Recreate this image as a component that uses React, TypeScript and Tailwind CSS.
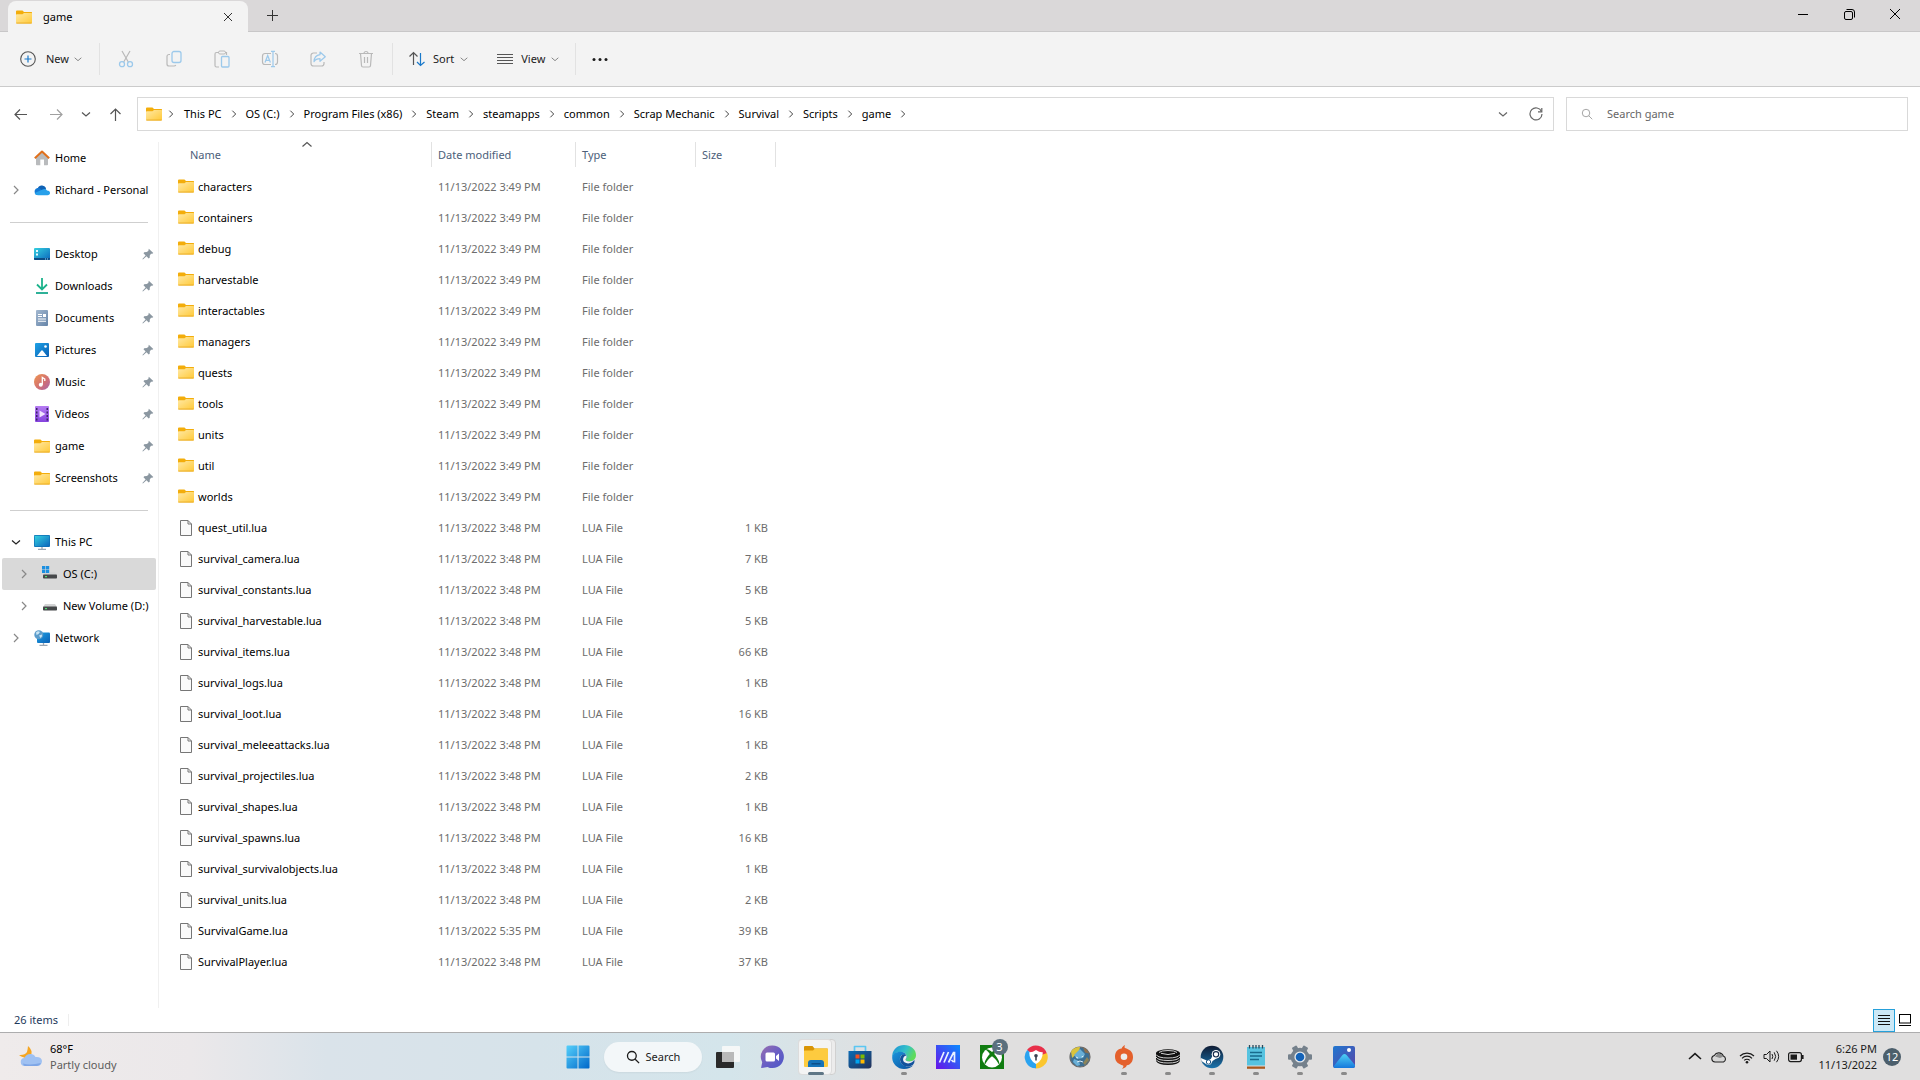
import React from "react";

type P = { className?: string };

/* ---------- line icons ---------- */

function Chevron({ dir, className = "" }: { dir: "up" | "down" | "right"; className?: string }) {
  const d = { up: "M1.5 7.5 6 3.5l4.5 4", down: "M2 4.5 6 8l4-3.5", right: "M4 2l4 4-4 4" }[dir];
  return (
    <svg viewBox="0 0 12 12" className={`shrink-0 ${className}`} fill="none" stroke="currentColor" strokeWidth="1.2">
      <path d={d} />
    </svg>
  );
}

function Icon({ size = 18, children, className = "" }: { size?: number; children: React.ReactNode; className?: string }) {
  return (
    <svg width={size} height={size} viewBox={`0 0 ${size} ${size}`} fill="none" className={`shrink-0 ${className}`} aria-hidden="true">
      {children}
    </svg>
  );
}

const GREY = "#b9b9b9";
const BLUE = "#9cc9eb";

const CutIcon = () => (
  <Icon>
    <path d="M5 1l6.300 11M13 1L6.700 12" stroke={GREY} strokeWidth="1.200" />
    <circle cx="5" cy="14.200" r="2.500" stroke={BLUE} strokeWidth="1.300" />
    <circle cx="13" cy="14.200" r="2.500" stroke={BLUE} strokeWidth="1.300" />
  </Icon>
);
const CopyIcon = () => (
  <Icon>
    <path d="M5 4.500H4A2 2 0 0 0 2 6.500V14a2 2 0 0 0 2 2h5a2 2 0 0 0 1.800-1" stroke={GREY} strokeWidth="1.200" />
    <rect x="7" y="1.500" width="9" height="11" rx="2" stroke={BLUE} strokeWidth="1.300" />
  </Icon>
);
const PasteIcon = () => (
  <Icon>
    <path d="M6 2.500H3.500A1.500 1.500 0 0 0 2 4v11.500A1.500 1.500 0 0 0 3.500 17H6M12 2.500h1.500v2.500" stroke={GREY} strokeWidth="1.200" />
    <rect x="5.500" y="1" width="7" height="3" rx="1.500" stroke={GREY} />
    <rect x="8.500" y="6.500" width="7.500" height="10.500" rx="1" stroke={BLUE} strokeWidth="1.300" />
  </Icon>
);
const RenameIcon = () => (
  <Icon>
    <path d="M10 3.500H4a2.500 2.500 0 0 0-2.500 2.500v6A2.500 2.500 0 0 0 4 14.500h6M14 3.500a2.500 2.500 0 0 1 2.500 2.500v6a2.500 2.500 0 0 1-2.500 2.500" stroke={GREY} strokeWidth="1.200" />
    <path d="M4 12.500l2.700-7 2.700 7M5 10.300h3.500M12 1.500v15M10 1.300h4M10 16.700h4" stroke={BLUE} strokeWidth="1.200" />
  </Icon>
);
const ShareIcon = () => (
  <Icon>
    <path d="M8 3H4.500A2.500 2.500 0 0 0 2 5.500v8A2.500 2.500 0 0 0 4.500 16h8a2.500 2.500 0 0 0 2.500-2.500V12" stroke={GREY} strokeWidth="1.200" />
    <path d="M11 2l5.300 4.700L11 11.300V8.700c-3 0-4.700.8-6 3 .2-4 2-6.500 6-7z" stroke={BLUE} strokeWidth="1.200" strokeLinejoin="round" />
  </Icon>
);
const TrashIcon = () => (
  <Icon>
    <path d="M2 3.500h14M3.500 3.500l1 12A1.500 1.500 0 0 0 6 17h6a1.500 1.500 0 0 0 1.500-1.500l1-12M7 3.500a2 2 0 0 1 4 0M7.500 7v6M10.500 7v6" stroke={GREY} strokeWidth="1.200" />
  </Icon>
);

const SearchGlyph = ({ className = "" }: P) => (
  <svg viewBox="0 0 16 16" fill="none" stroke="currentColor" className={`shrink-0 ${className}`} aria-hidden="true">
    <circle cx="6.700" cy="6.700" r="5" />
    <path d="M10.500 10.500L15 15" />
  </svg>
);

/* ---------- explorer icons ---------- */

const FolderIcon = () => (
  <svg width="16" height="14" viewBox="0 0 16 14" className="shrink-0" aria-hidden="true">
    <defs>
      <linearGradient id="fold" x1="0" y1="0" x2="1" y2="1">
        <stop offset="0" stopColor="#ffe9a6" />
        <stop offset="1" stopColor="#ffc937" />
      </linearGradient>
    </defs>
    <path d="M0 1.500Q0 .5 1 .5h5.500L8 2h7.500q.5 0 .5.600V5H0z" fill="#f3ad0b" />
    <path d="M0 5q0-.700.700-.700H6.500L8 3h7.400q.600 0 .600.600V12.500q0 1-1 1H1q-1 0-1-1z" fill="url(#fold)" />
    <path d="M.3 13.100h15.400" stroke="#e9a820" strokeWidth=".9" />
  </svg>
);

const FileIcon = () => (
  <svg width="12" height="16" viewBox="0 0 12 16" className="shrink-0" aria-hidden="true">
    <path d="M.5.500h7.500l3.500 3.500v11.500H.5z" fill="#fafafa" stroke="#767676" />
    <path d="M8 .5V4h3.500" fill="none" stroke="#767676" />
  </svg>
);

const HomeIcon = () => (
  <Icon size={16}>
    <path d="M2 7.500L8 2l6 5.500V14.500q0 .800-.800.800H10V9.500H6.300v5.800H2.800q-.8 0-.8-.8z" fill="#b9bbbd" />
    <path d="M.8 8.300L8 1.500l7.200 6.800" stroke="#e0701c" strokeWidth="2" strokeLinejoin="round" />
  </Icon>
);
const CloudIcon = () => (
  <Icon size={16}>
    <path d="M3.500 7.500A4.500 4.500 0 0 1 12 6l-1 5H3z" fill="#0f62b5" />
    <path d="M3.800 13A3.500 3.500 0 0 1 3 6.200c1.500-.300 3 .3 4 1.200l6 4.600-1 1z" fill="#1478d4" />
    <path d="M4 13.200C2.500 13.200 1 12.500.7 11L8 7.800c2-1.500 4.500-.8 5 .7 2 0 3 1.200 3 2.500s-1 2.200-2.500 2.200z" fill="#28a0ea" />
  </Icon>
);
const DesktopIcon = () => (
  <Icon size={16}>
    <defs>
      <linearGradient id="desk" x1="0" y1="0" x2="1" y2="1">
        <stop offset="0" stopColor="#35d1e0" />
        <stop offset="1" stopColor="#0b66bd" />
      </linearGradient>
    </defs>
    <rect y="2" width="16" height="12" rx="1" fill="url(#desk)" />
    <path d="M0 12h16v1q0 1-1 1H1q-1 0-1-1z" fill="#0c4c86" />
    <path d="M2 4h2v2H2zM2 7.500h2v2H2z" fill="#e7fbff" />
    <path d="M11 12.500h1v1h-1zM13 12.500h1v1h-1z" fill="#9cd7f4" />
  </Icon>
);
const DownloadIcon = () => (
  <Icon size={16}>
    <path d="M8 0v11M3 6.500L8 11.500l5-5" stroke="#1cb38c" strokeWidth="1.800" />
    <path d="M2 15h12" stroke="#17a98d" strokeWidth="1.800" />
  </Icon>
);
const DocumentIcon = () => (
  <Icon size={16}>
    <defs>
      <linearGradient id="docg" x1="0" y1="0" x2="1" y2="1">
        <stop offset="0" stopColor="#a3b8d0" />
        <stop offset="1" stopColor="#6584a8" />
      </linearGradient>
    </defs>
    <rect x="2" y="0" width="12" height="16" rx="1" fill="url(#docg)" />
    <path d="M4 4.500h4M4 6.500h4M4 9h8M4 11.300h8" stroke="#fff" strokeWidth="1.100" />
    <rect x="9" y="4" width="3" height="3" fill="#fff" />
  </Icon>
);
const PicturesIcon = () => (
  <Icon size={16}>
    <defs>
      <linearGradient id="picg" x1="0" y1="0" x2="1" y2="1">
        <stop offset="0" stopColor="#1ea2e6" />
        <stop offset="1" stopColor="#0a5fb4" />
      </linearGradient>
    </defs>
    <rect x="1" y="1" width="14" height="14" rx="1" fill="url(#picg)" />
    <path d="M3 14l4.200-5.300q.8-.8 1.600 0L13 14z" fill="#fff" />
    <circle cx="11.500" cy="4.500" r="1.300" fill="#fff" />
  </Icon>
);
const MusicIcon = () => (
  <Icon size={16}>
    <defs>
      <linearGradient id="musg" x1="0" y1="0" x2="1" y2="1">
        <stop offset="0" stopColor="#f0964f" />
        <stop offset=".6" stopColor="#cf6e76" />
        <stop offset="1" stopColor="#a565b0" />
      </linearGradient>
    </defs>
    <circle cx="8" cy="8" r="8" fill="url(#musg)" />
    <circle cx="6.800" cy="10.700" r="2" fill="#fff" />
    <path d="M8.300 10.700V3.500l2.500 1.500v2" stroke="#fff" strokeWidth="1.300" />
  </Icon>
);
const VideosIcon = () => (
  <Icon size={16}>
    <defs>
      <linearGradient id="vidg" x1="0" y1="0" x2="0" y2="1">
        <stop offset="0" stopColor="#b57bf2" />
        <stop offset="1" stopColor="#8543de" />
      </linearGradient>
    </defs>
    <rect x="1" width="14" height="16" rx="1" fill="url(#vidg)" />
    <path d="M2 2h1.500v2H2zM2 5.500h1.500v2H2zM2 9h1.500v2H2zM2 12.500h1.500v2H2zM12.500 2H14v2h-1.500zM12.500 5.500H14v2h-1.500zM12.500 9H14v2h-1.500zM12.500 12.500H14v2h-1.500z" fill="#3b2466" />
    <path d="M5.500 4.500v7l6-3.500z" fill="#f0e4ff" />
  </Icon>
);
const MonitorIcon = () => (
  <Icon size={16}>
    <rect y="1" width="16" height="12" rx="1" fill="#0d6fb5" />
    <rect x=".7" y="1.700" width="14.600" height="10.600" rx=".5" fill="url(#desk)" />
    <path d="M8 13v2M4 15.300h8" stroke="#9aa6b3" strokeWidth="1.300" />
  </Icon>
);
const NetworkIcon = () => (
  <Icon size={16}>
    <rect x="3" y="2.500" width="13" height="10.500" rx="1" fill="url(#picg)" />
    <path d="M9.500 13v2M5.500 15.300h8" stroke="#9aa6b3" strokeWidth="1.300" />
    <circle cx="4.800" cy="4.800" r="4.500" fill="#5c9ccb" />
    <path d="M2 2.500q2-2 4-.5L4.500 4 2.500 5zM5 5.500l3-1q.5 2-1.500 3.500z" fill="#c9e5f4" />
  </Icon>
);
const DriveIcon = ({ os = false }: { os?: boolean }) => (
  <Icon size={16}>
    <path d="M3 6h10l2 3H1z" fill="#d3d4d5" />
    <rect x="1" y="8.500" width="14" height="4" rx=".8" fill="#46484a" />
    <rect x="3" y="10" width="2" height="1.200" fill="#4ee070" />
    {os && (
      <>
        <path d="M-1-1h9v8h-9z" fill="#d9d9d9" />
        <path d="M0 0h3.300v3.200H0zM3.900 0h3.300v3.200H3.900zM0 3.800h3.300V7H0zM3.900 3.800h3.300V7H3.900z" fill="#1b8fe0" />
      </>
    )}
  </Icon>
);
const PinIcon = () => (
  <svg width="12" height="12" viewBox="0 0 12 12" className="shrink-0" aria-hidden="true">
    <path d="M6.800.7l4.500 4.300-1 .8L9 5.800 7.800 7.500l-.1 2.300-1 .7L4.500 8.300.9 11.400l-.5-.5 3.200-3.500L1.500 5.200l.7-1 2.500-.1L6.300 3z" fill="#8b97a1" />
  </svg>
);

/* ---------- data ---------- */

type NavItem = { label: string; icon: React.ReactNode; chevron?: "right" | "down"; pinned?: boolean; nested?: boolean; selected?: boolean };

const NAV_GROUPS: NavItem[][] = [
  [
    { label: "Home", icon: <HomeIcon /> },
    { label: "Richard - Personal", icon: <CloudIcon />, chevron: "right" },
  ],
  [
    { label: "Desktop", icon: <DesktopIcon />, pinned: true },
    { label: "Downloads", icon: <DownloadIcon />, pinned: true },
    { label: "Documents", icon: <DocumentIcon />, pinned: true },
    { label: "Pictures", icon: <PicturesIcon />, pinned: true },
    { label: "Music", icon: <MusicIcon />, pinned: true },
    { label: "Videos", icon: <VideosIcon />, pinned: true },
    { label: "game", icon: <FolderIcon />, pinned: true },
    { label: "Screenshots", icon: <FolderIcon />, pinned: true },
  ],
  [
    { label: "This PC", icon: <MonitorIcon />, chevron: "down" },
    { label: "OS (C:)", icon: <DriveIcon os />, chevron: "right", nested: true, selected: true },
    { label: "New Volume (D:)", icon: <DriveIcon />, chevron: "right", nested: true },
    { label: "Network", icon: <NetworkIcon />, chevron: "right" },
  ],
];

const CRUMBS = ["This PC", "OS (C:)", "Program Files (x86)", "Steam", "steamapps", "common", "Scrap Mechanic", "Survival", "Scripts", "game"];

const FOLDERS = ["characters", "containers", "debug", "harvestable", "interactables", "managers", "quests", "tools", "units", "util", "worlds"];

const FILES: [string, string, string][] = [
  ["quest_util.lua", "3:48", "1"],
  ["survival_camera.lua", "3:48", "7"],
  ["survival_constants.lua", "3:48", "5"],
  ["survival_harvestable.lua", "3:48", "5"],
  ["survival_items.lua", "3:48", "66"],
  ["survival_logs.lua", "3:48", "1"],
  ["survival_loot.lua", "3:48", "16"],
  ["survival_meleeattacks.lua", "3:48", "1"],
  ["survival_projectiles.lua", "3:48", "2"],
  ["survival_shapes.lua", "3:48", "1"],
  ["survival_spawns.lua", "3:48", "16"],
  ["survival_survivalobjects.lua", "3:48", "1"],
  ["survival_units.lua", "3:48", "2"],
  ["SurvivalGame.lua", "5:35", "39"],
  ["SurvivalPlayer.lua", "3:48", "37"],
];

const ROWS = [
  ...FOLDERS.map((name) => ({ name, folder: true, date: "11/13/2022 3:49 PM", type: "File folder", size: "" })),
  ...FILES.map(([name, time, kb]) => ({ name, folder: false, date: `11/13/2022 ${time} PM`, type: "LUA File", size: `${kb} KB` })),
];

/* ---------- window ---------- */

function TitleBar() {
  return (
    <header className="flex h-8 border-b border-[#c8c7c8] bg-[#dad8d9] pl-2">
      <div className="mt-px -mb-px flex w-60 items-center rounded-t-lg bg-[#f3f3f3] pr-3 pl-2">
        <FolderIcon />
        <span className="ml-[11px] flex-1">game</span>
        <button aria-label="Close tab" className="flex size-4 items-center justify-center">
          <Icon size={10}><path d="M1 1l8 8M9 1L1 9" stroke="#333" /></Icon>
        </button>
      </div>
      <button aria-label="New tab" className="ml-4 flex w-4 items-center justify-center">
        <Icon size={11}><path d="M5.500 0v11M0 5.500h11" stroke="#333" /></Icon>
      </button>
      <div className="ml-auto flex h-7 items-center pr-0.5">
        <button aria-label="Minimize" className="flex w-[46px] justify-center">
          <Icon size={10}><path d="M0 5.500h10" stroke="#000" /></Icon>
        </button>
        <button aria-label="Restore" className="flex w-[46px] justify-center">
          <Icon size={11}>
            <rect x=".5" y="2.500" width="8" height="8" rx="1.500" stroke="#000" />
            <path d="M2.500.500H8A2.500 2.500 0 0 1 10.500 3v5.500" stroke="#000" />
          </Icon>
        </button>
        <button aria-label="Close" className="flex w-[46px] justify-center">
          <Icon size={10}><path d="M0 0l10 10M10 0L0 10" stroke="#000" /></Icon>
        </button>
      </div>
    </header>
  );
}

const Divider = () => <span className="h-8 w-px bg-[#e2e2e2]" />;

function Toolbar() {
  const actions: [string, React.ReactNode][] = [
    ["Cut", <CutIcon />],
    ["Copy", <CopyIcon />],
    ["Paste", <PasteIcon />],
    ["Rename", <RenameIcon />],
    ["Share", <ShareIcon />],
    ["Delete", <TrashIcon />],
  ];
  return (
    <div role="toolbar" aria-label="Commands" className="flex h-[55px] items-center border-b border-[#cbcbcb] bg-[#f3f3f3] pl-5 text-[#1b1b1b]">
      <button className="flex w-[79px] items-center">
        <Icon size={16}>
          <circle cx="8" cy="8" r="7.300" stroke="#555" strokeWidth="1.100" />
          <path d="M8 4.500v7M4.500 8h7" stroke="#1979ca" strokeWidth="1.200" />
        </Icon>
        <span className="ml-2.5">New</span>
        <Chevron dir="down" className="ml-1 size-2.5 text-[#888]" />
      </button>
      <Divider />
      <div className="flex gap-[30px] px-[17px]">
        {actions.map(([label, icon]) => (
          <button key={label} aria-label={label} disabled>{icon}</button>
        ))}
      </div>
      <Divider />
      <button className="ml-4 flex items-center">
        <Icon size={16}>
          <path d="M4.500 14V1.500M.500 5.500l4-4 4 4" stroke="#555" strokeWidth="1.200" />
          <path d="M11.500 2v12.500M8 11l3.500 3.500L15.500 11" stroke="#1979ca" strokeWidth="1.200" />
        </Icon>
        <span className="ml-2">Sort</span>
        <Chevron dir="down" className="ml-[5px] size-2.5 text-[#888]" />
      </button>
      <button className="ml-7 flex items-center">
        <Icon size={16}><path d="M0 3.500h16M0 6.500h16M0 9.500h16M0 12.500h16" stroke="#555" /></Icon>
        <span className="ml-2">View</span>
        <Chevron dir="down" className="ml-[5px] size-2.5 text-[#888]" />
      </button>
      <span className="ml-[15px] flex"><Divider /></span>
      <button aria-label="See more" className="ml-4">
        <Icon size={16}>
          <circle cx="2" cy="8.500" r="1.500" fill="#1b1b1b" />
          <circle cx="8" cy="8.500" r="1.500" fill="#1b1b1b" />
          <circle cx="14" cy="8.500" r="1.500" fill="#1b1b1b" />
        </Icon>
      </button>
    </div>
  );
}

function AddressRow() {
  return (
    <div className="flex items-center py-2.5 pr-3 pl-3.5">
      <div className="flex w-[123px] items-center">
        <button aria-label="Back"><Icon size={13}><path d="M13 6.500H1.500M6 1.500l-5 5 5 5" stroke="#555" strokeWidth="1.200" /></Icon></button>
        <button aria-label="Forward" className="ml-[23px]"><Icon size={13}><path d="M0 6.500h11.500M7 1.500l5 5-5 5" stroke="#a0a0a0" strokeWidth="1.200" /></Icon></button>
        <button aria-label="Recent locations" className="ml-[17px]"><Chevron dir="down" className="size-3 text-[#555]" /></button>
        <button aria-label="Up" className="ml-[17px]"><Icon size={13}><path d="M6.500 13V1.500M1.500 6l5-5 5 5" stroke="#555" strokeWidth="1.200" /></Icon></button>
      </div>
      <nav aria-label="Address" className="flex h-[34px] flex-1 items-center border border-[#d9d9d9] bg-white pl-2">
        <FolderIcon />
        <Chevron dir="right" className="mr-2 ml-1 size-2.5 text-[#444]" />
        {CRUMBS.map((c) => (
          <span key={c} className="flex items-center">
            <a href="#" className="text-black">{c}</a>
            <Chevron dir="right" className="mx-[7px] size-2.5 text-[#444]" />
          </span>
        ))}
        <button aria-label="Previous locations" className="ml-auto"><Chevron dir="down" className="size-3 text-[#666]" /></button>
        <button aria-label="Refresh" className="mr-2.5 ml-5">
          <Icon size={14}>
            <path d="M12.500 4.500A6 6 0 1 0 13 7" stroke="#666" strokeWidth="1.200" />
            <path d="M12.800 1v3.800H9" stroke="#666" strokeWidth="1.200" />
          </Icon>
        </button>
      </nav>
      <label className="ml-3 flex h-[34px] w-[342px] items-center border border-[#d9d9d9] bg-white pl-3.5">
        <SearchGlyph className="size-3 text-[#888]" />
        <input aria-label="Search game" placeholder="Search game" className="ml-3.5 min-w-0 flex-1 outline-none placeholder:text-[#666]" />
      </label>
    </div>
  );
}

function Sidebar() {
  return (
    <aside className="w-[159px] shrink-0 border-r border-[#f0f0f0]">
      {NAV_GROUPS.map((group, i) => (
        <React.Fragment key={i}>
          {i > 0 && <div className="mr-2.5 ml-2.5 flex h-8 items-center"><hr className="w-full border-[#cfcfcf]" /></div>}
          <ul>
            {group.map((n) => (
              <li key={n.label} className={`mr-0.5 ml-0.5 flex h-8 items-center rounded-xs pr-0.5 ${n.nested ? "pl-4" : "pl-2"} ${n.selected ? "bg-[#d9d9d9]" : ""}`}>
                <span className="flex w-6 shrink-0">
                  {n.chevron && <Chevron dir={n.chevron} className={`size-3 ${n.chevron === "down" ? "text-[#222]" : "text-[#888]"}`} />}
                </span>
                {n.icon}
                <a href="#" className="ml-[5px] whitespace-nowrap">{n.label}</a>
                {n.pinned && <span className="ml-auto"><PinIcon /></span>}
              </li>
            ))}
          </ul>
        </React.Fragment>
      ))}
    </aside>
  );
}

function FileTable() {
  const head = "flex h-[25px] items-center border-r border-[#e2e2e2] font-normal";
  return (
    <main className="relative flex-1">
      <Chevron dir="up" className="absolute -top-[3px] left-[142px] size-3 text-[#555]" />
      <table className="w-[617px] table-fixed text-left">
        <colgroup>
          <col className="w-[273px]" />
          <col className="w-36" />
          <col className="w-[120px]" />
          <col className="w-20" />
        </colgroup>
        <thead className="text-[#4c607a]">
          <tr>
            <th className="p-0 pb-1"><div className={`${head} pl-[31px]`}>Name</div></th>
            <th className="p-0 pb-1"><div className={`${head} pl-1.5`}>Date modified</div></th>
            <th className="p-0 pb-1"><div className={`${head} pl-1.5`}>Type</div></th>
            <th className="p-0 pb-1"><div className={`${head} pl-1.5`}>Size</div></th>
          </tr>
        </thead>
        <tbody className="text-[#6d6d6d]">
          {ROWS.map((r) => (
            <tr key={r.name} className="h-[31px]">
              <td className="p-0 pl-[19px] text-black">
                <div className="flex items-center gap-1">
                  <span className="flex h-4 w-4 items-start justify-center">{r.folder ? <FolderIcon /> : <FileIcon />}</span>
                  {r.name}
                </div>
              </td>
              <td className="p-0 pl-1.5">{r.date}</td>
              <td className="p-0 pl-1.5">{r.type}</td>
              <td className="p-0 pr-2 text-right">{r.size}</td>
            </tr>
          ))}
        </tbody>
      </table>
    </main>
  );
}

function StatusBar() {
  return (
    <footer className="flex h-6 items-center pl-3.5 text-[#1e395b]">
      <span>26 items</span>
      <span className="ml-2.5 h-3 w-px bg-[#eeeeee]" />
      <button aria-label="Details view" className="ml-auto flex h-[23px] w-[22px] items-center justify-center border border-[#26a0da] bg-[#cce8f6]">
        <Icon size={12}><path d="M0 1.500h12M0 4.500h12M0 7.500h12M0 10.500h12" stroke="#111" /></Icon>
      </button>
      <button aria-label="Large icons view" className="mr-2 ml-[3px] flex w-3.5 justify-center">
        <Icon size={12}><rect x=".5" y=".5" width="11" height="8.500" stroke="#000" /><path d="M0 11.500h12" stroke="#000" /></Icon>
      </button>
    </footer>
  );
}

/* ---------- taskbar ---------- */

function TB({ size = 24, children }: { size?: number; children: React.ReactNode }) {
  return <svg width={size} height={size} viewBox="0 0 24 24" fill="none" aria-hidden="true">{children}</svg>;
}

const StartLogo = (
  <TB>
    <defs>
      <linearGradient id="win" x1="0" y1="0" x2="1" y2="1">
        <stop offset="0" stopColor="#55d0fb" />
        <stop offset="1" stopColor="#0067c9" />
      </linearGradient>
    </defs>
    <path d="M.5 1.500q0-1 1-1h10V11.500H.5zM12.500.500h10q1 0 1 1v10h-11zM.5 12.500h11v11h-10q-1 0-1-1zM12.500 12.500h11v10q0 1-1 1h-10z" fill="url(#win)" />
  </TB>
);
const TaskView = (
  <TB>
    <rect x="0" y="7" width="18" height="16" rx="1" fill="#2a2a2a" />
    <rect x="6" y="1" width="18" height="16" rx="1" fill="#f8f8f8" opacity=".9" />
    <path d="M6 7h12v10H6z" fill="#b9b9b9" />
  </TB>
);
const Chat = (
  <TB>
    <defs>
      <linearGradient id="chat" x1="0" y1="0" x2="1" y2="1">
        <stop offset="0" stopColor="#9a6fb0" />
        <stop offset=".5" stopColor="#6a5fc4" />
        <stop offset="1" stopColor="#4a56c8" />
      </linearGradient>
    </defs>
    <path d="M12.500.500a11.300 11.300 0 1 1-5 21.400L2 23q-1 .2-.8-.8l1-5A11.300 11.300 0 0 1 12.500.5z" fill="url(#chat)" />
    <rect x="5.500" y="7.500" width="9.500" height="9" rx="1.500" fill="#fff" />
    <path d="M16 11l3-2.500v7.500L16 13.500z" fill="#fff" />
  </TB>
);
const Explorer = (
  <TB>
    <path d="M0 2q0-1 1-1h7.500l2 2.500H23q1 0 1 1V9H0z" fill="#d99405" />
    <path d="M0 6q0-.5.500-.5H9l2-2h12q1 0 1 1V21q0 1-1 1H1q-1 0-1-1z" fill="#fdcb3f" />
    <path d="M4 22v-4q0-3 3-3h10q3 0 3 3v4z" fill="#1573b9" />
    <path d="M7.500 18.800h9" stroke="#0b4a82" strokeWidth="1.300" />
  </TB>
);
const Store = (
  <TB>
    <defs>
      <linearGradient id="store" x1="0" y1="0" x2="1" y2="1">
        <stop offset="0" stopColor="#0a6bb5" />
        <stop offset="1" stopColor="#243158" />
      </linearGradient>
    </defs>
    <path d="M6.500 6V1.500h11V6" stroke="#5cc7f2" strokeWidth="1.700" strokeLinejoin="round" />
    <path d="M.5 6h23v14.500q0 3-3 3h-17q-3 0-3-3z" fill="url(#store)" />
    <path d="M7.500 9.500h4v4h-4z" fill="#f25022" />
    <path d="M12.500 9.500h4v4h-4z" fill="#7fba00" />
    <path d="M7.500 14.500h4v4h-4z" fill="#00a4ef" />
    <path d="M12.500 14.500h4v4h-4z" fill="#ffb900" />
  </TB>
);
const Edge = (
  <TB>
    <defs>
      <linearGradient id="edge1" x1="0" y1="0" x2="1" y2=".4">
        <stop offset="0" stopColor="#1b8fd8" />
        <stop offset=".6" stopColor="#35c1c8" />
        <stop offset="1" stopColor="#5edb5a" />
      </linearGradient>
      <linearGradient id="edge2" x1="0" y1="0" x2="1" y2="1">
        <stop offset="0" stopColor="#1a95dd" />
        <stop offset="1" stopColor="#0b4f9c" />
      </linearGradient>
    </defs>
    <path d="M.300 10C1 4 6 0 12 0c7 0 12 4.500 12 10 0 4-3 6.500-6.500 6.500-2.500 0-4-1-4-2 0-.6 1-1.200 1-3C14.500 9 12.500 7 9 7 5 7 1.500 8.500.3 12z" fill="url(#edge1)" />
    <path d="M.200 13C0 9 4 6.800 8.500 6.800c2.500 0 4.800 1.200 5.700 2.900C9.500 8.500 7.500 12 8 15c.6 4 4.500 6.500 8 6.500 2.500 0 4-.7 5.500-1.600C19.500 22.500 16 24 12 24 5.500 24 .5 19 .2 13z" fill="url(#edge2)" />
    <path d="M8 14c.2-3 2.500-4.800 5-4.700 1 .7 1.500 1.500 1.500 2.200 0 1.800-1 2.400-1 3 0 1 1.500 2 4 2 2 0 3.500-.6 4.800-1.800.6 2-.3 4-1.300 5-1.500 1-3 1.800-5.500 1.800-4 0-7.500-3.500-7.500-7.500z" fill="#13529c" />
    <path d="M14.500 11.500c0 1.800-1 2.400-1 3 0 1 1.500 2 4 2 2 0 3.800-.8 5-2.200-1.500 4-7 5.200-10 3-2.500-2-1.500-6 1.600-6.800z" fill="#eef3f5" />
  </TB>
);
const MyAsus = (
  <TB>
    <defs>
      <linearGradient id="asus" x1="1" y1="0" x2="0" y2="1">
        <stop offset="0" stopColor="#0a8bff" />
        <stop offset="1" stopColor="#6a12e8" />
      </linearGradient>
    </defs>
    <path d="M0 0h24v24H0z" fill="url(#asus)" />
    <path d="M3.500 17.500L8 7M8 17.500L12.500 7M12.500 17.500L17.500 7.500h1v10M15.500 15l2 2" stroke="#e9f2ff" strokeWidth="1.700" />
  </TB>
);
const Xbox = (
  <TB>
    <path d="M0 0h24v24H0z" fill="#107c10" />
    <circle cx="12" cy="12.500" r="10" fill="#fff" />
    <path d="M5 4.500c3-1 5 .8 7 2.500 2-1.700 4-3.500 7-2.500-1.500.5-3 2-4.800 4.500 3 3.500 6 8 5 11C17.500 16.500 15 13.500 12 11.300 9 13.500 6.500 16.500 4.800 20c-1-3 2-7.500 5-11C8 6.500 6.500 5 5 4.500z" fill="#107c10" />
  </TB>
);
const ShieldBrowser = (
  <TB>
    <path d="M12 12L3 5A11.300 11.300 0 0 1 23 9z" fill="#e8304a" />
    <path d="M12 12L23 8A11.300 11.300 0 0 1 11 23.300z" fill="#fbc62f" />
    <path d="M12 12L12 23.300A11.300 11.300 0 0 1 3.200 5z" fill="#2aa3f0" />
    <path d="M12 5q3.500 2.500 6.800 2.200 0 8.300-6.800 11.800Q5.200 15.500 5.200 7.200 8.500 7.500 12 5z" fill="#fff" />
    <circle cx="12" cy="10.800" r="1.800" fill="#3b4252" />
    <path d="M11.200 11h1.600v4.500h-1.600z" fill="#3b4252" />
  </TB>
);
const Globe = (
  <TB>
    <circle cx="12" cy="12" r="10" fill="#3d6f92" stroke="#6b6b6b" strokeWidth="1.200" />
    <path d="M3 6.500A10 10 0 0 1 12 2l-1 5-7 6z" fill="#d9c33c" />
    <path d="M15 2.500a10 10 0 0 1 6 6l-4-1z" fill="#8f6f4c" />
    <path d="M12 4l5 5-2 4-6 1-3-4zM6 14l5 2 1 4-3 1-4-4z" fill="#69afd6" />
    <path d="M8 12l2 1M13.500 12l2-1M9 17q3-2 6 0" stroke="#dcecf5" />
    <path d="M19 12l2 3-4 5-2-2z" fill="#8d8358" />
  </TB>
);
const Origin = (
  <TB>
    <path d="M13 0c-2 1-3 2.300-3.300 3.400C5.600 3.600 3 7 3 11.500c0 6 4 7.500 8 9 1 .5 0 2-1 3.500 3.500-1 4.500-2.500 4.800-3.700 4-.5 6.200-4 6.200-8.300 0-6-4-7.500-8-9-.8-.5-.5-1.500 0-3z" fill="#e4602c" />
    <circle cx="12" cy="11.800" r="3.300" fill="#ececec" />
  </TB>
);
const Disks = (
  <TB>
    <ellipse cx="12" cy="8" rx="12" ry="3.700" fill="#111" />
    <path d="M0 8h24v8q-2 4-12 4T0 16z" fill="#111" />
    <path d="M0 9.500q2 3.500 12 3.500t12-3.500M0 12q2 3.500 12 3.500T24 12M0 14.500Q2 18 12 18t12-3.500M3 7.500q2-2 9-2t9 2M5 8.300q7 2.500 14 0" stroke="#e4e4e4" strokeWidth=".9" />
  </TB>
);
const Steam = (
  <TB>
    <defs>
      <linearGradient id="steam" x1="0" y1="0" x2="0" y2="1">
        <stop offset="0" stopColor="#101c34" />
        <stop offset="1" stopColor="#1a74ad" />
      </linearGradient>
    </defs>
    <circle cx="12" cy="12" r="11.300" fill="url(#steam)" />
    <path d="M.8 13l6 2.500 4-1.500 2.500-4.500L17 13l-4.500 3-1.500 3q-2.500 2-5 0L1.500 16z" fill="#fff" />
    <circle cx="16" cy="9.300" r="4.300" fill="#fff" />
    <circle cx="16" cy="9.300" r="2.700" fill="#fff" stroke="#14294a" strokeWidth="1.100" />
    <circle cx="8.500" cy="17" r="2.200" stroke="#175080" strokeWidth="1" />
  </TB>
);
const Notepad = (
  <TB>
    <path d="M3 21.500h18v2.300H3z" fill="#a9591f" />
    <path d="M3 2h18v18.500H3z" fill="#57c3e0" />
    <path d="M6 7.500h12M6 11h12M6 14.500h9" stroke="#186b8c" strokeWidth="1.300" />
    <path d="M5.500 0v3.500M9 0v3.500M12 0v3.500M15 0v3.500M18.500 0v3.500" stroke="#2b4a5c" strokeWidth="1.300" />
  </TB>
);
const Gear = (
  <TB>
    {[0, 60, 120].map((a) => (
      <rect key={a} x="9.300" y="0" width="5.400" height="24" rx="1" fill="#75818c" transform={`rotate(${a + 30} 12 12)`} />
    ))}
    <circle cx="12" cy="12" r="9.300" fill="#75818c" />
    <circle cx="12" cy="12" r="5.600" fill="#e6eaee" />
    <circle cx="12" cy="12" r="4.300" fill="#1463b8" />
  </TB>
);
const Photos = (
  <TB>
    <defs>
      <linearGradient id="photo" x1="0" y1="0" x2="1" y2="1">
        <stop offset="0" stopColor="#1f77d0" />
        <stop offset="1" stopColor="#5946a8" />
      </linearGradient>
      <linearGradient id="photo2" x1="0" y1="0" x2="0" y2="1">
        <stop offset="0" stopColor="#4fd0f5" />
        <stop offset="1" stopColor="#1578dc" />
      </linearGradient>
    </defs>
    <rect x="1" y="1" width="22" height="22" rx="2" fill="url(#photo)" />
    <path d="M1.500 21.500l9-11.500q2-2 4 0l8.500 10v1q0 2-2 2H3q-1 0-1.500-1.500z" fill="url(#photo2)" />
    <circle cx="17" cy="5" r="2" fill="#fff" />
  </TB>
);

const APPS: { name: string; icon: React.ReactNode; state?: "running" | "active"; badge?: string }[] = [
  { name: "Task view", icon: TaskView },
  { name: "Chat", icon: Chat },
  { name: "File Explorer", icon: Explorer, state: "active" },
  { name: "Store", icon: Store },
  { name: "Edge", icon: Edge, state: "running" },
  { name: "MyASUS", icon: MyAsus },
  { name: "Xbox", icon: Xbox, badge: "3" },
  { name: "Secure Browser", icon: ShieldBrowser },
  { name: "Globe", icon: Globe },
  { name: "Origin", icon: Origin, state: "running" },
  { name: "Disks", icon: Disks, state: "running" },
  { name: "Steam", icon: Steam, state: "running" },
  { name: "Notepad", icon: Notepad, state: "running" },
  { name: "Settings", icon: Gear, state: "running" },
  { name: "Photos", icon: Photos, state: "running" },
];

function Taskbar() {
  return (
    <footer className="flex h-12 items-center border-t border-[#adadae] bg-[linear-gradient(to_right,#efebeb_0%,#ebe8ea_10%,#dae3ea_17%,#d6e3ea_28%,#d4e5eb_38%,#dfe0e1_46%,#e0dfdf_50%)]">
      <button className="flex flex-1 items-center pl-[18px] text-left">
        <svg width="26" height="24" viewBox="0 0 26 24" aria-hidden="true">
          <path d="M10 1q5 4 3 10-3 3-7 1.500-3-1-5-2.500 6 .5 8-3 .8-3 1-6z" fill="#f5a623" />
          <path d="M7 21a4 4 0 0 1-.5-8Q8 9 12.500 9q3.500 0 5 3 6-.5 6.500 4-.3 5-5 5z" fill="#9fc1f2" />
          <path d="M5 18.500q7 2 18-.5-1.500 3-4 3H7q-1.500 0-2-2.500z" fill="#7ea6e6" />
        </svg>
        <span className="ml-1.5 leading-4">
          <span className="block text-black">68°F</span>
          <span className="block text-[#5c5c5c]">Partly cloudy</span>
        </span>
      </button>
      <div className="flex items-center pr-0.5">
        <button aria-label="Start" className="flex w-[52px] justify-center">{StartLogo}</button>
        <button className="flex h-[30px] w-[98px] items-center rounded-full bg-[#f3f7f9] pl-[22px] text-[#1b1b1b] shadow-xs">
          <SearchGlyph className="size-3.5 stroke-[1.5]" />
          <span className="ml-1.5">Search</span>
        </button>
        <div className="ml-1 flex">
          {APPS.map((a) => (
            <button key={a.name} aria-label={a.name} className="relative flex h-11 w-11 items-center justify-center">
              {a.state === "active" && (
                <>
                  <span className="absolute inset-y-1 left-1 w-[38px] rounded-sm border border-[#d0d0d0] bg-[#ececec]" />
                  <span className="absolute inset-y-1 left-1 w-[34px] rounded-sm border border-[#dcdcdc] bg-[#f4f4f4]" />
                  <span className="absolute bottom-1 h-[3px] w-4 rounded-full bg-[#5f7685]" />
                </>
              )}
              {a.state === "running" && <span className="absolute bottom-1 h-[3px] w-1.5 rounded-full bg-[#8a8a8a]" />}
              <span className="relative">{a.icon}</span>
              {a.badge && (
                <span className="absolute top-1 right-1.5 flex size-4 items-center justify-center rounded-full bg-[#5a6f7d] text-white">{a.badge}</span>
              )}
            </button>
          ))}
        </div>
      </div>
      <div className="flex flex-1 items-center justify-end pr-[19px] text-[#1b1b1b]">
        <button aria-label="Show hidden icons"><Chevron dir="up" className="size-4" /></button>
        <button aria-label="OneDrive" className="ml-2">
          <Icon size={16}>
            <path d="M4 13A3.300 3.300 0 0 1 3.300 6.500 5 5 0 0 1 12.300 7 3.200 3.200 0 0 1 12.500 13z" fill="#d6d6d6" stroke="#222" strokeWidth="1.100" />
            <path d="M4 7.500q2-3.500 5-2.800 2.500.5 3 3L9 9z" fill="#8b8b8b" />
          </Icon>
        </button>
        <button aria-label="Network" className="ml-3">
          <Icon size={16}>
            <path d="M1 7a10 10 0 0 1 14 0M3 9.300a7 7 0 0 1 10 0M5.200 11.400a4 4 0 0 1 5.600 0" stroke="#1b1b1b" strokeWidth="1.200" />
            <circle cx="8" cy="13.300" r="1.300" fill="#1b1b1b" />
          </Icon>
        </button>
        <button aria-label="Volume" className="ml-2">
          <Icon size={17}>
            <path d="M1 6.500h2.500L7 3v11l-3.500-3.500H1z" stroke="#1b1b1b" strokeLinejoin="round" />
            <path d="M9 6q1.500 2.500 0 5M11.200 4.300q3 4.200 0 8.400M13.500 2.800q4.300 5.700 0 11.400" stroke="#1b1b1b" />
          </Icon>
        </button>
        <button aria-label="Battery" className="ml-2">
          <Icon size={16}>
            <rect x=".6" y="3.600" width="12.800" height="9" rx="2" stroke="#1b1b1b" strokeWidth="1.200" />
            <rect x="2.500" y="5.500" width="6.500" height="5.200" fill="#1b1b1b" />
            <path d="M14.800 6v4" stroke="#1b1b1b" strokeWidth="1.600" />
          </Icon>
        </button>
        <button className="ml-3.5 text-right leading-4">
          <span className="block">6:26 PM</span>
          <span className="block">11/13/2022</span>
        </button>
        <span className="ml-1.5 flex size-[18px] items-center justify-center rounded-full bg-[#4c5f6c] text-white">12</span>
      </div>
    </footer>
  );
}

export default function App() {
  return (
    <div className="flex min-h-screen flex-col bg-white font-['Noto_Sans',sans-serif] text-[11px] leading-4 text-black">
      <TitleBar />
      <Toolbar />
      <AddressRow />
      <div className="flex flex-1 pt-px">
        <Sidebar />
        <FileTable />
      </div>
      <StatusBar />
      <Taskbar />
    </div>
  );
}
